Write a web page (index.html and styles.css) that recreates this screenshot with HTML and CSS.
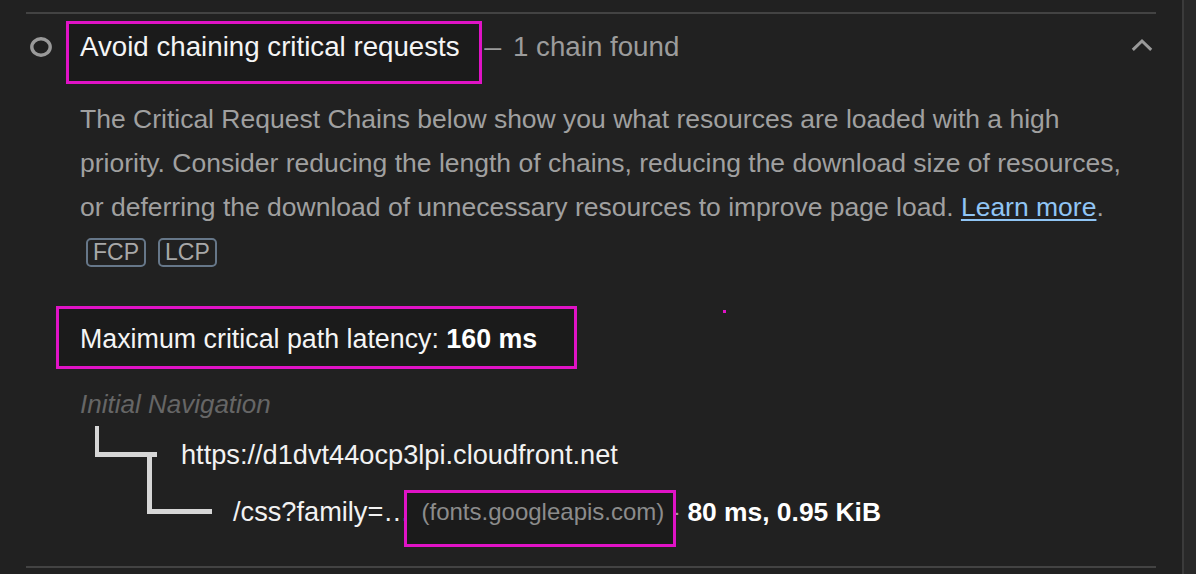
FILE: index.html
```html
<!DOCTYPE html>
<html lang="en">
<head>
<meta charset="utf-8">
<title>Avoid chaining critical requests</title>
<link rel="stylesheet" href="styles.css">
</head>
<body>
<div class="page">
  <main class="main">
    <section class="audit">
      <div class="audit-header">
        <svg class="status-icon" width="22" height="20" viewBox="0 0 22 20" aria-hidden="true">
          <ellipse cx="11" cy="10" rx="9.2" ry="8.2" fill="none" stroke="#9a9a9a" stroke-width="3.4"/>
        </svg>
        <div class="title-box mark">Avoid chaining critical requests</div>
        <div class="display-value"><span class="sep">–</span>1 chain found</div>
        <svg class="chevron" width="22" height="14" viewBox="0 0 22 14" aria-hidden="true">
          <polyline points="1.8,11.8 11,3 20.2,11.8" fill="none" stroke="#9a9a9a" stroke-width="3"/>
        </svg>
      </div>
      <div class="audit-body">
        <p class="description">The Critical Request Chains below show you what resources are loaded with a high priority. Consider reducing the length of chains, reducing the download size of resources, or deferring the download of unnecessary resources to improve page load. <a href="#">Learn more</a>.</p>
        <div class="badges"><span class="badge">FCP</span><span class="badge">LCP</span></div>
        <div class="latency-row">
          <div class="latency mark">Maximum critical path latency: <b>160 ms</b></div>
          <span class="dot"></span>
        </div>
        <div class="crc-root">Initial Navigation</div>
        <div class="crc-tree">
          <div class="crc-node">
            <span class="tree-marker m1"></span>
            <span class="url">https://d1dvt44ocp3lpi.cloudfront.net</span>
          </div>
          <div class="crc-node">
            <span class="tree-marker m2"></span>
            <span class="url">/css?family=…</span>
            <span class="host mark">(fonts.googleapis.com)</span>
            <span class="sep2">-</span>
            <b class="stats">80 ms, 0.95 KiB</b>
          </div>
        </div>
      </div>
    </section>
  </main>
  <aside class="sidebar"></aside>
</div>
</body>
</html>
```

FILE: styles.css
```css
* { box-sizing: border-box; }

html, body {
  margin: 0;
  height: 574px;
  overflow: hidden;
  background: #212121;
}

body {
  font-family: "Liberation Sans", Arial, Helvetica, sans-serif;
  color: #f2f2f2;
}

.page {
  display: flex;
  height: 574px;
}

.main {
  flex: 1;
  padding: 12px 26px 0 26px;
}

.sidebar {
  width: 14px;
  flex: none;
  border-left: 2px solid #3b3b3b;
  background: #292929;
}

.audit {
  border-top: 2px solid #434343;
  border-bottom: 2px solid #434343;
}

.mark {
  border: 3px solid #e013c6;
  background: #1b1b1b;
}

/* header */
.audit-header {
  display: flex;
  align-items: flex-start;
  padding: 7px 3px 0 4px;
}

.status-icon {
  flex: none;
  margin-top: 16px;
  margin-right: 14px;
}

.title-box {
  font-size: 27.7px;
  line-height: 32px;
  padding: 7px 19px 18px 11px;
  color: #f5f5f5;
}

.display-value {
  margin-top: 10px;
  font-size: 27.7px;
  line-height: 32px;
  color: #9c9c9c;
}

.sep {
  display: inline-block;
  transform: scaleX(1.1);
  margin: 0 13px 0 3px;
}

.chevron {
  flex: none;
  margin-left: auto;
  margin-top: 17px;
}

/* body */
.audit-body {
  padding-bottom: 26px;
}

.description {
  margin: 13px 16px 0 54px;
  font-size: 26.5px;
  line-height: 44px;
  color: #a0a0a0;
}

.description a {
  color: #90c5f5;
  text-decoration: underline;
  text-underline-offset: 3px;
}

.badges {
  display: flex;
  gap: 12px;
  margin: 9px 0 0 60px;
}

.badge {
  font-size: 23px;
  line-height: 25px;
  padding: 0 5px;
  border: 2px solid #667789;
  border-radius: 5px;
  color: #a8a8a8;
}

.latency-row {
  display: flex;
  align-items: flex-start;
  margin: 39px 0 0 30px;
}

.latency {
  font-size: 26.8px;
  line-height: 32px;
  padding: 14px 37px 11px 21px;
  color: #f5f5f5;
}

.latency b {
  color: #ffffff;
}

.dot {
  width: 3px;
  height: 3px;
  margin: 4px 0 0 146px;
  background: #e013c6;
}

.crc-root {
  margin: 19px 0 0 54px;
  font-size: 26px;
  line-height: 32px;
  font-style: italic;
  color: #666666;
}

.crc-tree {
  margin: 6px 0 0 69px;
}

.crc-node {
  display: flex;
  align-items: flex-start;
  height: 57px;
  font-size: 27.2px;
  line-height: 58px;
  white-space: nowrap;
}

.tree-marker {
  flex: none;
  height: 57px;
}

.m1 {
  width: 86px;
  background:
    linear-gradient(#d6d6d6, #d6d6d6) 0 0 / 4px 31px no-repeat,
    linear-gradient(#d6d6d6, #d6d6d6) 0 26px / 62px 5px no-repeat,
    linear-gradient(#d6d6d6, #d6d6d6) 52px 26px / 5px 31px no-repeat;
}

.m2 {
  width: 138px;
  background:
    linear-gradient(#d6d6d6, #d6d6d6) 52px 0 / 5px 31px no-repeat,
    linear-gradient(#d6d6d6, #d6d6d6) 52px 26px / 65px 5px no-repeat;
}

.url {
  color: #f2f2f2;
}

.host {
  position: relative;
  z-index: 1;
  margin: 7px 0 0 -7px;
  height: 57px;
  font-size: 24px;
  line-height: 28px;
  padding: 5px 9px 18px 15px;
  color: #8c8c8c;
}

.sep2 {
  margin-left: -6px;
  color: #9c9c9c;
}

.stats {
  margin-left: 8px;
  font-size: 26.4px;
  color: #ffffff;
}
```
